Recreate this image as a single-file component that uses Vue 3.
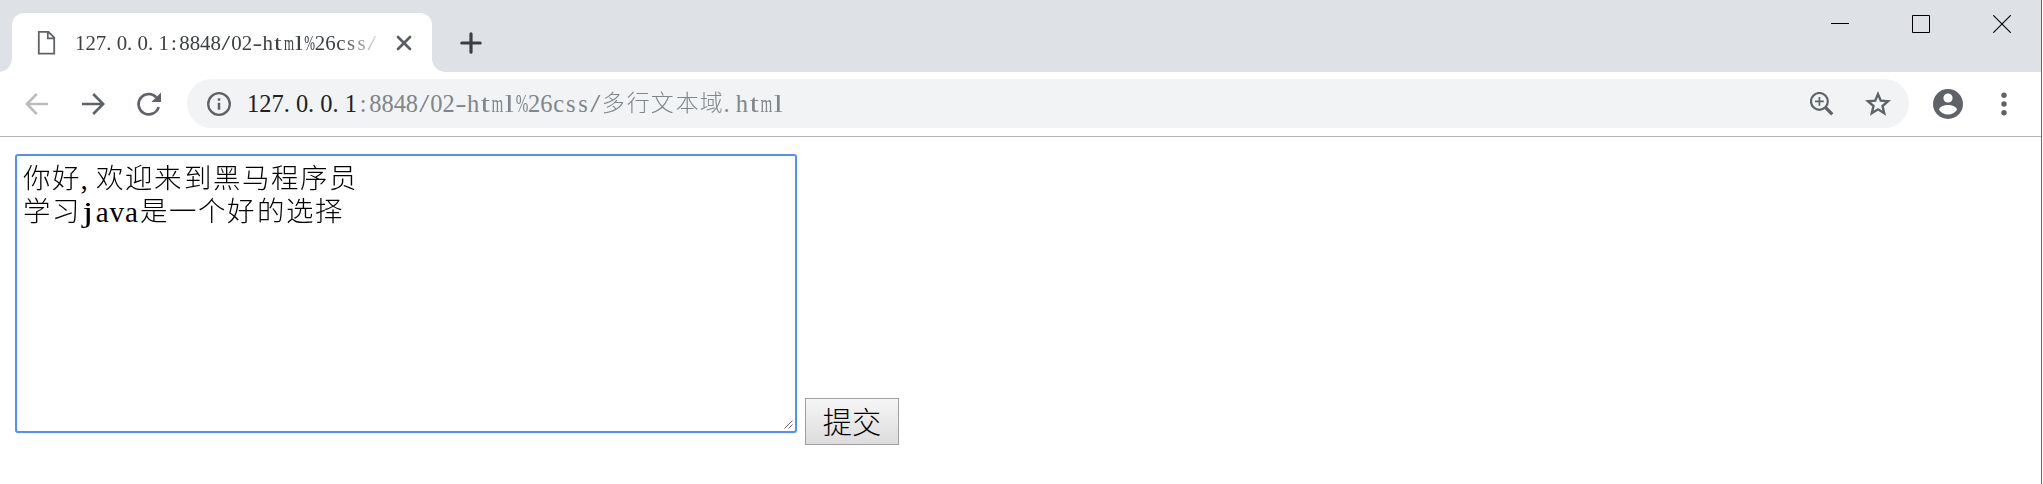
<script setup>
import { ref } from 'vue'

const host = ref('127.0.0.1')
const basePath = ref(':8848/02-html%26css/')
const fileName = ref('多行文本域.html')
const lines = ref(['你好,欢迎来到黑马程序员', '学习java是一个好的选择'])
const submitLabel = ref('提交')

// Every character sits in a half-width or full-width cell, as in a bitmap-style mono face.
function cells(text) {
  return Array.from(text).map((ch) => {
    let kind = 'half'
    if (/[\u4e00-\u9fff]/.test(ch)) kind = 'full'
    else if (ch === 'm' || ch === '%') kind = 'half wide'
    else if (ch === '.' || ch === ',') kind = 'half dot'
    else if (ch === '/') kind = 'half slash'
    else if (ch === '-') kind = 'half dash'
    else if ('ltj'.includes(ch)) kind = 'half narrow'
    return { ch, kind }
  })
}
</script>

<template>
  <div class="window">
    <header class="strip">
      <div class="tab">
        <svg class="page-icon" width="20" height="26" viewBox="0 0 20 26">
          <path d="M1.8 1.8H11.5L17.2 7.7V23.7H1.8Z M10.8 2V8.4H17" fill="none" stroke="#5f6368" stroke-width="1.8" />
        </svg>
        <div class="tab-title mono"><span v-for="(c, i) in cells(host + basePath)" :key="i" :class="c.kind"><span>{{ c.ch }}</span></span></div>
        <svg class="tab-close" width="16" height="16" viewBox="0 0 16 16">
          <path d="M2 2L14 14M14 2L2 14" stroke="#5a5d61" stroke-width="2.7" stroke-linecap="round" />
        </svg>
      </div>
      <svg class="plus" width="22" height="22" viewBox="0 0 22 22">
        <path d="M11 1.8V20.2M1.8 11H20.2" stroke="#3c4043" stroke-width="3.2" stroke-linecap="round" />
      </svg>
      <div class="controls">
        <svg width="18" height="18" viewBox="0 0 18 18"><path d="M0 8.5H18" stroke="#000" /></svg>
        <svg width="18" height="18" viewBox="0 0 18 18"><path d="M.5 .5H17.5V17.5H.5Z" fill="none" stroke="#000" /></svg>
        <svg width="18" height="18" viewBox="0 0 18 18"><path d="M.3 .3L17.7 17.7M17.7 .3L.3 17.7" stroke="#000" stroke-width="1.1" /></svg>
      </div>
    </header>

    <nav class="toolbar">
      <svg class="back" width="24" height="24" viewBox="0 0 24 24">
        <path d="M23 12H2.5M11.8 2L1.8 12L11.8 22" fill="none" stroke="#babcbe" stroke-width="2.5" />
      </svg>
      <svg class="forward" width="24" height="24" viewBox="0 0 24 24">
        <path d="M1 12H21.5M12.2 2L22.2 12L12.2 22" fill="none" stroke="#5f6368" stroke-width="2.6" />
      </svg>
      <svg class="reload" width="26" height="26" viewBox="0 0 26 26">
        <path d="M20.2 6.2A10.2 10.2 0 1 0 22.6 16" fill="none" stroke="#5f6368" stroke-width="2.7" />
        <path d="M25 1.5V11H15.4Z" fill="#5f6368" />
      </svg>
      <div class="omnibox">
        <svg class="info" width="24" height="24" viewBox="0 0 24 24">
          <circle cx="12" cy="12" r="10.8" fill="none" stroke="#5f6368" stroke-width="2.3" />
          <path d="M12 10.7V17.8M12 6.2V8.8" stroke="#5f6368" stroke-width="2.5" />
        </svg>
        <div class="url mono"><span v-for="(c, i) in cells(host)" :key="'h' + i" class="host" :class="c.kind"><span>{{ c.ch }}</span></span><span v-for="(c, i) in cells(basePath + fileName)" :key="'p' + i" :class="c.kind"><span>{{ c.ch }}</span></span></div>
        <svg class="zoom" width="24" height="24" viewBox="0 0 24 24">
          <circle cx="9.4" cy="9.4" r="8.4" fill="none" stroke="#5f6368" stroke-width="2.2" />
          <path d="M9.4 5V13.8M5 9.4H13.8" stroke="#5f6368" stroke-width="1.7" />
          <path d="M15.5 15.5L22.3 22.3" stroke="#5f6368" stroke-width="3.2" />
        </svg>
        <svg class="star" width="26" height="26" viewBox="0 0 26 26">
          <path d="M13 3.1L15.8 9.7L23 10.3L17.5 15L19.2 22.2L13 18.3L6.8 22.2L8.5 15L3 10.3L10.2 9.7Z" fill="none" stroke="#5f6368" stroke-width="2.4" />
        </svg>
      </div>
      <svg class="avatar" width="30" height="30" viewBox="0 0 30 30">
        <circle cx="15" cy="15" r="15" fill="#5f6368" />
        <circle cx="15" cy="9" r="4.6" fill="#fff" />
        <path d="M6 20.8C6.2 17.7 11.3 16 15 16S23.8 17.7 24 20.8C22 24 18.8 25.6 15 25.6S8 24 6 20.8Z" fill="#fff" />
      </svg>
      <svg class="more" width="6" height="24" viewBox="0 0 6 24">
        <g fill="#5f6368"><circle cx="3" cy="3.2" r="2.7" /><circle cx="3" cy="12" r="2.7" /><circle cx="3" cy="20.8" r="2.7" /></g>
      </svg>
    </nav>

    <main class="page">
      <div class="textarea mono">
        <div v-for="(line, n) in lines" :key="n" class="line"><span v-for="(c, i) in cells(line)" :key="i" :class="c.kind"><span>{{ c.ch }}</span></span></div>
        <svg class="grip" width="9" height="9" viewBox="0 0 9 9">
          <path d="M.5 8.5L8.5 .5M4.5 8.5L8.5 4.5" stroke="#555" stroke-width=".9" />
        </svg>
      </div>
      <button class="submit">{{ submitLabel }}</button>
    </main>
  </div>
</template>

<style>
body {
  margin: 0;
  background: #fff;
}
</style>

<style scoped>
.window {
  box-sizing: border-box;
  width: 2042px;
  height: 484px;
  overflow: hidden;
  border-right: 1px solid #1a7bc9;
  background: #fff;
}
svg {
  display: block;
  flex: none;
}
.mono {
  font-family: "Liberation Serif", "Noto Sans CJK SC", serif;
  white-space: nowrap;
}
.half,
.full {
  display: inline-block;
  text-align: center;
}
.half {
  width: 0.5em;
}
.full {
  width: 1em;
  font-weight: 300;
  font-family: "Noto Sans CJK SC", sans-serif;
}
.half > span,
.full > span {
  display: inline-block;
}
.full > span {
  transform: scale(0.94);
}
.wide > span {
  margin: 0 -0.25em;
  transform: scaleX(0.62);
}
.narrow > span {
  transform: scaleX(1.35);
}
.dot {
  text-align: left;
}
.slash > span {
  transform: scaleX(1.5);
}
.dash > span {
  transform: scaleX(1.4);
}
.strip {
  display: flex;
  align-items: flex-end;
  height: 72px;
  background: #dee1e6;
}
.tab {
  position: relative;
  display: flex;
  align-items: center;
  box-sizing: border-box;
  width: 420px;
  height: 59px;
  margin-left: 12px;
  padding: 0 20px 0 25px;
  border-radius: 12px 12px 0 0;
  background: #fff;
}
.tab::before,
.tab::after {
  content: "";
  position: absolute;
  bottom: 0;
  width: 13px;
  height: 13px;
}
.tab::before {
  left: -13px;
  background: radial-gradient(circle at 0 0, transparent 12.5px, #fff 13px);
}
.tab::after {
  right: -13px;
  background: radial-gradient(circle at 100% 0, transparent 12.5px, #fff 13px);
}
.page-icon {
  margin-top: 1px;
}
.tab-title {
  width: 304px;
  margin-left: 18px;
  overflow: hidden;
  color: #3c4043;
  font-size: 20.86px;
  line-height: 30px;
  -webkit-mask-image: linear-gradient(90deg, #000 265px, transparent 309px);
  mask-image: linear-gradient(90deg, #000 265px, transparent 309px);
}
.tab-close {
  margin-left: 17px;
}
.plus {
  margin: 0 0 18px 28px;
}
.controls {
  display: flex;
  gap: 63px;
  align-self: flex-start;
  margin: 15px 30px 0 auto;
}
.toolbar {
  display: flex;
  align-items: center;
  box-sizing: border-box;
  height: 65px;
  padding-bottom: 1px;
  border-bottom: 1px solid #b3b4b6;
}
.back {
  margin-left: 25px;
}
.forward {
  margin-left: 32px;
}
.reload {
  margin-left: 31px;
}
.omnibox {
  display: flex;
  align-items: center;
  box-sizing: border-box;
  width: 1722px;
  height: 49px;
  margin-left: 25px;
  padding: 0 18px 0 20px;
  border-radius: 25px;
  background: #f1f3f4;
}
.url {
  margin: -2px 0 0 16px;
  color: #80868b;
  font-size: 24.45px;
  line-height: 36px;
}
.host {
  color: #202124;
}
.zoom {
  margin-left: auto;
}
.star {
  margin-left: 31px;
}
.avatar {
  margin-left: 24px;
}
.more {
  margin-left: 38px;
}
.page {
  display: flex;
  align-items: flex-start;
  padding: 17px 0 0 15px;
}
.textarea {
  position: relative;
  box-sizing: border-box;
  width: 782px;
  height: 279px;
  padding: 4px 5px;
  border: 2px solid #4d90fe;
  border-radius: 3px;
  color: #000;
  font-size: 29.2px;
}
.line {
  height: 33px;
  line-height: 33px;
}
.grip {
  position: absolute;
  right: 2px;
  bottom: 2px;
}
.submit {
  box-sizing: border-box;
  width: 94px;
  height: 47px;
  margin: 244px 0 0 8px;
  padding: 0 0 3px;
  border: 1px solid #a0a0a0;
  border-radius: 0;
  background: linear-gradient(#f6f6f6, #dcdcdc);
  color: #000;
  font: 300 29.2px/42px "Noto Sans CJK SC", sans-serif;
}
</style>
